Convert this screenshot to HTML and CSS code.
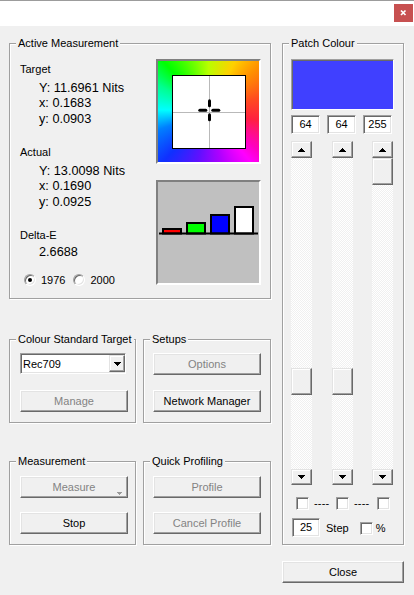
FILE: index.html
```html
<!DOCTYPE html>
<html lang="en">
<head>
<meta charset="utf-8">
<title>Measurement</title>
<link rel="stylesheet" href="styles.css">
</head>
<body>
<div class="window">
  <div class="titlebar">
    <div class="close-btn">
      <svg width="19" height="18" viewBox="0 0 19 18"><path d="M7 6.5 L11.5 11 M11.5 6.5 L7 11" stroke="#fff" stroke-width="1.7" fill="none"/></svg>
    </div>
  </div>
  <div class="client">
    <div class="left-col">
      <section class="group am">
        <div class="group-title">Active Measurement</div>
        <div class="am-body">
          <div class="readings">
            <div class="heading">Target</div>
            <div class="value first">Y: 11.6961 Nits</div>
            <div class="value">x: 0.1683</div>
            <div class="value">y: 0.0903</div>
            <div class="heading sect">Actual</div>
            <div class="value first">Y: 13.0098 Nits</div>
            <div class="value">x: 0.1690</div>
            <div class="value">y: 0.0925</div>
            <div class="heading sect">Delta-E</div>
            <div class="value delta">2.6688</div>
            <div class="radios">
              <span class="radio checked"></span><span class="radio-label">1976</span>
              <span class="radio second"></span><span class="radio-label">2000</span>
            </div>
          </div>
          <div class="graphs">
            <div class="gamut">
              <div class="gamut-inner">
                <svg width="72" height="72" viewBox="0 0 72 72">
                  <line x1="36.5" y1="0" x2="36.5" y2="72" stroke="#b9b9b9" stroke-width="1"/>
                  <line x1="0" y1="36.5" x2="72" y2="36.5" stroke="#b9b9b9" stroke-width="1"/>
                  <g stroke="#000" stroke-width="3" stroke-linecap="round">
                    <line x1="36.5" y1="24.8" x2="36.5" y2="29.8"/>
                    <line x1="36.5" y1="38.8" x2="36.5" y2="43.8"/>
                    <line x1="26.8" y1="34.3" x2="32.8" y2="34.3"/>
                    <line x1="39.8" y1="34.3" x2="45.8" y2="34.3"/>
                  </g>
                </svg>
              </div>
            </div>
            <div class="bars">
              <svg width="101" height="101" viewBox="0 0 101 101">
                <g stroke="#000" stroke-width="2">
                  <rect x="5" y="47" width="18" height="4.5" fill="#ff0000"/>
                  <rect x="29" y="41" width="18" height="10.5" fill="#00ff00"/>
                  <rect x="53" y="33" width="18" height="18.5" fill="#0000ff"/>
                  <rect x="77" y="25" width="18" height="26.5" fill="#ffffff"/>
                  <line x1="1" y1="51.5" x2="100" y2="51.5"/>
                </g>
              </svg>
            </div>
          </div>
        </div>
      </section>

      <div class="group-row first-row">
        <section class="group narrow">
          <div class="group-title">Colour Standard Target</div>
          <div class="group-body pad-left">
            <div class="combo">
              <span class="combo-text">Rec709</span>
              <span class="combo-btn"><svg width="7" height="4" viewBox="0 0 7 4"><path d="M0 0h7v1h-1v1h-1v1h-1v1h-1V3H2V2H1V1H0z" fill="#000"/></svg></span>
            </div>
            <button class="btn disabled second-btn-a">Manage</button>
          </div>
        </section>
        <section class="group wide">
          <div class="group-title">Setups</div>
          <div class="group-body pad-right">
            <button class="btn disabled">Options</button>
            <button class="btn second-btn-b">Network Manager</button>
          </div>
        </section>
      </div>

      <div class="group-row second-row">
        <section class="group narrow">
          <div class="group-title">Measurement</div>
          <div class="group-body pad-left body-b">
            <button class="btn disabled has-drop">Measure<span class="drop-arrow"><svg width="5" height="3" viewBox="0 0 5 3"><path d="M0 0h5v1h-1v1h-1v1h-1V2H1V1H0z" fill="#9a9a9a"/></svg></span></button>
            <button class="btn second-btn-c">Stop</button>
          </div>
        </section>
        <section class="group wide">
          <div class="group-title">Quick Profiling</div>
          <div class="group-body pad-right body-b">
            <button class="btn disabled">Profile</button>
            <button class="btn disabled second-btn-c">Cancel Profile</button>
          </div>
        </section>
      </div>
    </div>

    <div class="right-col">
      <section class="group patch">
        <div class="group-title">Patch Colour</div>
        <div class="patch-body">
          <div class="swatch"></div>
          <div class="edits">
            <div class="edit">64</div>
            <div class="edit">64</div>
            <div class="edit">255</div>
          </div>
          <div class="scrolls">
            <div class="sb sb-1">
              <div class="sb-btn up"><svg width="7" height="4" viewBox="0 0 7 4"><path d="M3 0h1v1h1v1h1v1h1v1H0V3h1V2h1V1h1z" fill="#000"/></svg></div>
              <div class="sb-track"><div class="thumb" style="margin-top:210px"></div></div>
              <div class="sb-btn down"><svg width="7" height="4" viewBox="0 0 7 4"><path d="M0 0h7v1h-1v1h-1v1h-1v1h-1V3H2V2H1V1H0z" fill="#000"/></svg></div>
            </div>
            <div class="sb sb-2">
              <div class="sb-btn up"><svg width="7" height="4" viewBox="0 0 7 4"><path d="M3 0h1v1h1v1h1v1h1v1H0V3h1V2h1V1h1z" fill="#000"/></svg></div>
              <div class="sb-track"><div class="thumb" style="margin-top:210px"></div></div>
              <div class="sb-btn down"><svg width="7" height="4" viewBox="0 0 7 4"><path d="M0 0h7v1h-1v1h-1v1h-1v1h-1V3H2V2H1V1H0z" fill="#000"/></svg></div>
            </div>
            <div class="sb">
              <div class="sb-btn up"><svg width="7" height="4" viewBox="0 0 7 4"><path d="M3 0h1v1h1v1h1v1h1v1H0V3h1V2h1V1h1z" fill="#000"/></svg></div>
              <div class="sb-track"><div class="thumb" style="margin-top:0px"></div></div>
              <div class="sb-btn down"><svg width="7" height="4" viewBox="0 0 7 4"><path d="M0 0h7v1h-1v1h-1v1h-1v1h-1V3H2V2H1V1H0z" fill="#000"/></svg></div>
            </div>
          </div>
          <div class="checks">
            <span class="cb"></span>
            <span class="dash">----</span>
            <span class="cb cb-2"></span>
            <span class="dash">----</span>
            <span class="cb cb-3"></span>
          </div>
          <div class="step-row">
            <div class="edit step-edit">25</div>
            <span class="step-label">Step</span>
            <span class="cb cb-pct"></span>
            <span class="pct">%</span>
          </div>
        </div>
      </section>
      <button class="btn close">Close</button>
    </div>
  </div>
</div>
</body>
</html>
```

FILE: styles.css
```css
* { box-sizing: border-box; }
html, body { margin: 0; padding: 0; }
body {
  width: 414px;
  height: 595px;
  overflow: hidden;
  background: #f0f0f0;
  font-family: "Liberation Sans", Arial, sans-serif;
  font-size: 11px;
  color: #000;
}
.window { width: 414px; height: 595px; background: #f0f0f0; }

.titlebar {
  height: 26px;
  background: #fff;
  border-top: 1px solid #9c9c9c;
  display: flex;
  justify-content: flex-end;
  padding: 3px 1px 0 0;
}
.close-btn {
  width: 19px;
  height: 18px;
  background: #c75050;
  display: flex;
}

.client { display: flex; padding: 17px 0 0 9px; }
.left-col { width: 262px; display: flex; flex-direction: column; }
.right-col { width: 122px; margin-left: 11px; display: flex; flex-direction: column; }

.group {
  border: 1px solid #a0a0a0;
  box-shadow: inset 1px 1px 0 #fff, 1px 1px 0 #fff;
}
.group-title {
  margin: -7px 0 0 6px;
  padding: 0 2px;
  line-height: 13px;
  background: #f0f0f0;
  width: max-content;
}

/* Active measurement */
.am { height: 256px; }
.am-body { display: flex; justify-content: space-between; padding: 9px 9px 0 10px; }
.readings { padding-top: 2.2px; }
.heading { font-size: 11px; line-height: 16px; }
.value { font-size: 12.7px; line-height: 15.5px; padding-left: 19px; }
.value.first { margin-top: 3.5px; }
.heading.sect { margin-top: 17px; }
.value.delta { margin-top: 1.5px; }
.radios { display: flex; align-items: center; line-height: 16px; margin-top: 12px; padding-left: 4px; }
.radio {
  width: 12px; height: 12px;
  border-radius: 50%;
  background: #fff;
  border: 1px solid;
  border-color: #a0a0a0 #fff #fff #a0a0a0;
  box-shadow: inset 1px 1px 0 #696969, inset -1px -1px 0 #e3e3e3;
  display: flex; align-items: center; justify-content: center;
}
.radio.checked::after {
  content: "";
  width: 4px; height: 4px;
  border-radius: 50%;
  background: #000;
}
.radio.second { margin-left: 8px; }
.radio-label { margin-left: 5px; }

.graphs { display: flex; flex-direction: column; gap: 16px; }
.gamut {
  width: 105px; height: 105px;
  border: 2px solid;
  border-color: #808080 #fff #fff #808080;
  padding: 14px 0 0 14px;
  background: conic-gradient(from 0deg,
    #b8ff00 0deg, #ffd000 28deg, #ff9000 48deg, #ff4a20 75deg, #ff2040 100deg,
    #ff00c0 128deg, #ff00ff 140deg, #b000ff 165deg, #6010ff 192deg, #1030ff 222deg,
    #0080ff 250deg, #00ffff 272deg, #00ff90 298deg, #00ff00 318deg, #60ff00 340deg, #b8ff00 360deg);
}
.gamut-inner { width: 74px; height: 74px; background: #fff; border: 1px solid #000; }
.gamut-inner svg, .bars svg { display: block; }
.bars {
  width: 105px; height: 105px;
  border: 2px solid;
  border-color: #808080 #fff #fff #808080;
  background: #c0c0c0;
}

/* lower groups */
.group-row { display: flex; gap: 7px; height: 84px; }
.first-row { margin-top: 40px; }
.second-row { margin-top: 38px; }
.group.narrow { width: 127px; }
.group.wide { width: 128px; }
.group-body { display: flex; flex-direction: column; padding-top: 7px; }
.group-body.body-b { padding-top: 8px; }
.pad-left { padding-left: 10px; }
.pad-right { padding-left: 9px; }

.btn {
  appearance: none;
  margin: 0;
  padding: 0;
  font: inherit;
  color: #000;
  width: 108px;
  height: 22px;
  background: #f0f0f0;
  border: 1px solid;
  border-color: #fff #696969 #696969 #fff;
  box-shadow: inset -1px -1px 0 #a0a0a0, inset 1px 1px 0 #e3e3e3;
  display: flex; align-items: center; justify-content: center;
}
.btn.disabled { color: #838383; }
.second-btn-a { margin-top: 16px; }
.second-btn-b { margin-top: 15px; }
.second-btn-c { margin-top: 14px; }
.has-drop { position: relative; }
.drop-arrow { position: absolute; right: 5px; top: 15px; display: flex; }

.combo {
  width: 106px; height: 21px;
  background: #fff;
  border: 1px solid;
  border-color: #a0a0a0 #fff #fff #a0a0a0;
  box-shadow: inset 1px 1px 0 #696969, inset -1px -1px 0 #e3e3e3;
  display: flex; align-items: center;
  padding-left: 2px;
}
.combo-text { flex: 1; }
.combo-btn {
  width: 16px; height: 17px;
  background: #f0f0f0;
  border: 1px solid;
  border-color: #e3e3e3 #696969 #696969 #e3e3e3;
  box-shadow: inset -1px -1px 0 #a0a0a0, inset 1px 1px 0 #fff;
  display: flex; align-items: center; justify-content: center;
}

/* patch colour */
.patch { height: 502px; }
.patch-body { padding: 9px 0 0 8px; }
.swatch {
  width: 103px; height: 51px;
  background: #4040ff;
  border: 1px solid;
  border-color: #a0a0a0 #fff #fff #a0a0a0;
  box-shadow: inset 1px 1px 0 #696969;
}
.edits { display: flex; gap: 7px; margin-top: 5px; }
.edit {
  width: 29px; height: 19px;
  background: #fff;
  border: 1px solid;
  border-color: #a0a0a0 #fff #fff #a0a0a0;
  box-shadow: inset 1px 1px 0 #696969, inset -1px -1px 0 #e3e3e3;
  display: flex; align-items: center; justify-content: center;
  line-height: 13px;
}
.scrolls { display: flex; margin-top: 7px; }
.sb {
  width: 21px; height: 344px;
  display: flex; flex-direction: column;
  background-color: #f7f7f7;
  background-image: repeating-conic-gradient(#fff 0% 25%, #f0f0f0 0% 50%);
  background-size: 2px 2px;
}
.sb-1 { margin-right: 20px; }
.sb-2 { margin-right: 19px; }
.sb-btn, .thumb {
  background: #f0f0f0;
  border: 1px solid;
  border-color: #e3e3e3 #696969 #696969 #e3e3e3;
  box-shadow: inset -1px -1px 0 #a0a0a0, inset 1px 1px 0 #fff;
}
.sb-btn { display: flex; align-items: center; justify-content: center; }
.sb-btn.up { height: 17px; }
.sb-btn.down { height: 16px; }
.sb-track { flex: 1; }
.thumb { height: 27px; }

.checks { display: flex; align-items: center; margin-top: 12px; padding-left: 5px; line-height: 13px; height: 13px; }
.cb {
  flex: none;
  width: 13px; height: 13px;
  background: #fff;
  border: 1px solid;
  border-color: #a0a0a0 #fff #fff #a0a0a0;
  box-shadow: inset 1px 1px 0 #696969, inset -1px -1px 0 #e3e3e3;
}
.dash { flex: none; margin-left: 5px; width: 15px; white-space: nowrap; letter-spacing: 0.2px; }
.cb-2 { margin-left: 7px; }
.cb-3 { margin-left: 8px; }

.step-row { display: flex; align-items: center; margin-top: 8px; padding-left: 1px; }
.step-edit { width: 28px; }
.step-label { margin-left: 6px; }
.cb-pct { margin-left: 11px; margin-top: 2px; }
.pct { margin-left: 3px; }

.btn.close { width: 122px; height: 22px; margin-top: 16px; }
```
